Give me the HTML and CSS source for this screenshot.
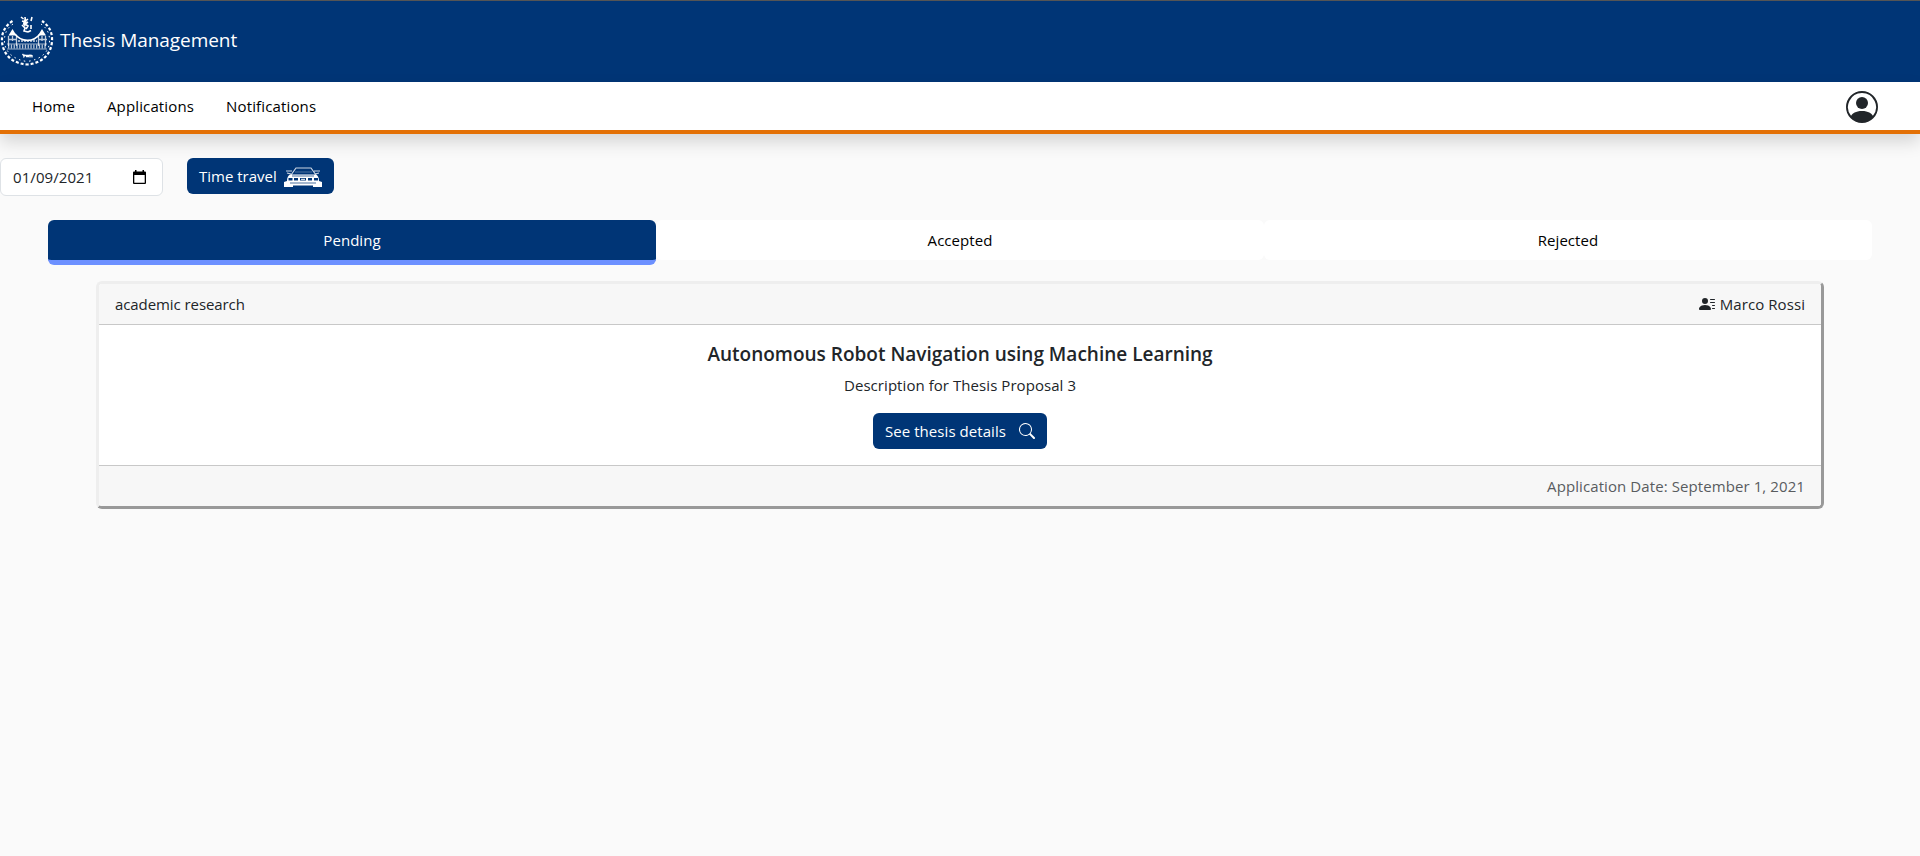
FILE: index.html
```
<!DOCTYPE html>
<html lang="en">
<head>
<meta charset="utf-8">
<title>Thesis Management</title>
<link rel="stylesheet" href="styles.css">
</head>
<body>
<header class="site-header">
  <div class="brand">
    <svg class="crest" viewBox="0 0 54 52" fill="none" stroke="#fff">
      <path d="M12.500 5C5 10 1.500 17 2 25c.5 12 9 22.500 25 23.500C43 47.500 51.500 37 52 25c.5-8-2.500-15-10-20" stroke-width="2.200" stroke-dasharray="3 2"/>
      <path d="M13 8C7 12 4 18 4.500 26c.5 9 8 17.500 22.500 19.500C42 43.500 49 35 49.500 26 50 18 47 12 41 8" stroke-width="1" stroke-dasharray="1.500 3.500"/>
      <path d="M21 1l2.500 2M22 5l3 1-1 3M25 1l.5 4 2.500-2M32 1l-1 4M28 6l-3 2 3 2-2 3M22 9l3 3-1 3 4 1M28 16l3-1.500M31 9v4" stroke-width="1.600"/>
      <path d="M24 3l3 3-2 5-2-3z" fill="#fff" stroke="none"/>
      <path d="M8.500 19.500l4-6.500 4 6.500zM38 19.500l4-6.500 4 6.500z" fill="#fff" stroke="none"/>
      <path d="M8.500 20v10M12.500 20v5M16.500 20v10M38.500 20v10M42 20v5M45.500 20v10M8 23.500h9M38 23.500h9" stroke-width="1.300" opacity=".75"/>
      <path d="M15 18c6 8 18 9 25 0" stroke-width="1.600"/>
      <path d="M18 25h19" stroke-width="2" stroke-dasharray="2 1" opacity=".6"/>
      <path d="M7 28h40M7 33h40" stroke-width="1" opacity=".6"/>
      <path d="M8 30.500h39" stroke-width="4" stroke-dasharray="1.300 1.500" opacity=".7"/>
      <path d="M22.500 38l2 2.500M25 38.500l-1.500 3M26 40.500h3M30 38.500v3M32 39v2.500M24 39.500h8" stroke-width="1.300"/>
    </svg>
    <span class="brand-name">Thesis Management</span>
  </div>
</header>
<nav class="navbar">
  <div class="links">
    <a>Home</a>
    <a>Applications</a>
    <a>Notifications</a>
  </div>
  <svg class="avatar" viewBox="0 0 16 16" fill="#212529">
    <path d="M11 6a3 3 0 1 1-6 0 3 3 0 0 1 6 0"/>
    <path fill-rule="evenodd" d="M0 8a8 8 0 1 1 16 0A8 8 0 0 1 0 8m8-7a7 7 0 0 0-5.468 11.370C3.242 11.226 4.805 10 8 10s4.757 1.225 5.468 2.370A7 7 0 0 0 8 1"/>
  </svg>
</nav>
<section class="clock">
  <div class="date-field">
    <span class="date">01/09/2021</span>
    <svg class="cal" viewBox="0 0 13 15"><path fill="#000" fill-rule="evenodd" d="M2 0h1.500v1.500h6V0H11v1.500h1q1 0 1 1V13q0 1-1 1H1q-1 0-1-1V2.500q0-1 1-1h1zM1.300 5v7.700h10.400V5z"/></svg>
  </div>
  <button class="btn travel"><span>Time travel</span>
    <svg class="car" viewBox="0 0 38 21" fill="none" stroke="#fff">
      <path d="M7 8l5-7h15l5 7M2 4h6M30 4h6M3 6l4 1M35 6l-4 1" stroke-width="1.200" opacity=".8"/>
      <path d="M11 5h17" stroke-width=".6" opacity=".5"/>
      <path fill="#fff" fill-rule="evenodd" stroke="none" d="M6 7.500h26q3 1.500 3 6.500l3 1v5h-9v-1.500H9V20H0v-5l3-1q0-5 3-6.500zM4.500 11v2.500h4V11zM10 11v2.500h4V11zM24 11v2.500h4V11zM30 11v2.500h4V11zM16 11v2.500h6V11z"/>
      <path d="M8 9h22M6 16h26" stroke="#003576" stroke-width=".7"/>
      <path d="M17 12.300h4" stroke-width="1"/>
    </svg>
  </button>
</section>
<div class="tabs">
  <div class="tab active">Pending</div>
  <div class="tab">Accepted</div>
  <div class="tab">Rejected</div>
</div>
<article class="card">
  <div class="card-head">
    <span class="kind">academic research</span>
    <div class="person">
      <svg class="lines" viewBox="0 0 16 16" fill="#212529"><path d="M6 8a3 3 0 1 0 0-6 3 3 0 0 0 0 6m-5 6s-1 0-1-1 1-4 6-4 6 3 6 4-1 1-1 1zM11 3.500a.5.5 0 0 1 .5-.5h4a.5.5 0 0 1 0 1h-4a.5.5 0 0 1-.5-.5m.5 2.500a.5.5 0 0 0 0 1h4a.5.5 0 0 0 0-1zm2 3a.5.5 0 0 0 0 1h2a.5.5 0 0 0 0-1zm0 3a.5.5 0 0 0 0 1h2a.5.5 0 0 0 0-1z"/></svg>
      <span class="name">Marco Rossi</span>
    </div>
  </div>
  <div class="card-body">
    <h5 class="title">Autonomous Robot Navigation using Machine Learning</h5>
    <p class="desc">Description for Thesis Proposal 3</p>
    <button class="btn details"><span>See thesis details</span>
      <svg class="search" viewBox="0 0 16 16" fill="#fff"><path d="M11.742 10.344a6.500 6.500 0 1 0-1.397 1.398h-.001q.044.060.098.115l3.850 3.850a1 1 0 0 0 1.415-1.414l-3.850-3.850a1 1 0 0 0-.115-.1zM12 6.500a5.500 5.500 0 1 1-11 0 5.500 5.500 0 0 1 11 0"/></svg>
    </button>
  </div>
  <div class="card-foot">Application Date: September 1, 2021</div>
</article>
</body>
</html>
```
FILE: styles.css
```
* { box-sizing: border-box; }
body { margin: 0; min-height: 856px; background: #fafafa; color: #212529; font: 15px/24px "Open Sans", "Noto Sans", sans-serif; white-space: nowrap; }
.site-header { height: 82px; padding-top: 15px; background: #003576; border-top: 1px solid #555; }
.brand { display: flex; align-items: flex-start; gap: 6px; color: #fff; }
.crest { width: 54px; height: 52px; }
.brand-name { font-size: 19px; line-height: 30px; padding-top: 9px; letter-spacing: -.06px; }
.navbar { display: flex; justify-content: space-between; align-items: center; height: 52px; padding: 0 42px 0 32px; background: #fff; border-bottom: 4px solid #e37005; box-shadow: 0 8px 16px rgba(0,0,0,.15); }
.links { display: flex; gap: 32px; color: #000; letter-spacing: .14px; }
.avatar { width: 32px; height: 32px; margin-top: 2px; }
.clock { display: flex; align-items: flex-start; gap: 24px; padding-top: 24px; height: 86px; }
.date-field { display: flex; align-items: center; justify-content: space-between; width: 163px; height: 38px; padding: 0 16px 0 12px; background: #fff; border: 1px solid #dee2e6; border-radius: 6px; }
.date { letter-spacing: .08px; }
.cal { width: 13px; height: 15px; }
.btn { display: flex; align-items: center; height: 36px; padding: 0 12px; border: 0; border-radius: 6px; background: #003576; color: #fff; font: inherit; }
.travel { width: 147px; justify-content: space-between; }
.car { width: 38px; height: 21px; margin-top: 3px; }
.tabs { display: grid; grid-template-columns: repeat(3, 1fr); margin: 0 48px; align-items: start; color: #000; letter-spacing: .05px; }
.tab { height: 40px; line-height: 40px; text-align: center; background: #fff; border-radius: 6px; }
.active { height: 45px; background: #003576; border-bottom: 5px solid #6c90ff; color: #fff; }
.card { margin: 16px 96px 0; height: 228px; display: flex; flex-direction: column; background: #fff; border: 3px solid; border-color: #eee #999 #999 #eee; border-radius: 6px; }
.card-head { display: flex; justify-content: space-between; align-items: center; height: 41px; padding: 0 16px; background: #f7f7f7; border-bottom: 1px solid #c8c8c8; border-radius: 3px 3px 0 0; }
.kind { letter-spacing: -.08px; }
.person { display: flex; align-items: center; gap: 5px; }
.name { letter-spacing: .08px; }
.lines { width: 16px; height: 16px; }
.card-body { flex: 1; display: flex; flex-direction: column; align-items: center; padding-top: 17px; }
.title { margin: 0 0 7px; font-size: 19px; line-height: 24px; font-weight: 600; }
.desc { margin: 0 0 16px; letter-spacing: .06px; }
.details { width: 174px; justify-content: space-between; letter-spacing: .06px; }
.search { width: 16px; height: 16px; }
.card-foot { height: 41px; padding: 8px 16px; text-align: right; color: #595c5f; background: #f7f7f7; border-top: 1px solid #c8c8c8; border-radius: 0 0 3px 3px; letter-spacing: .09px; }
```
